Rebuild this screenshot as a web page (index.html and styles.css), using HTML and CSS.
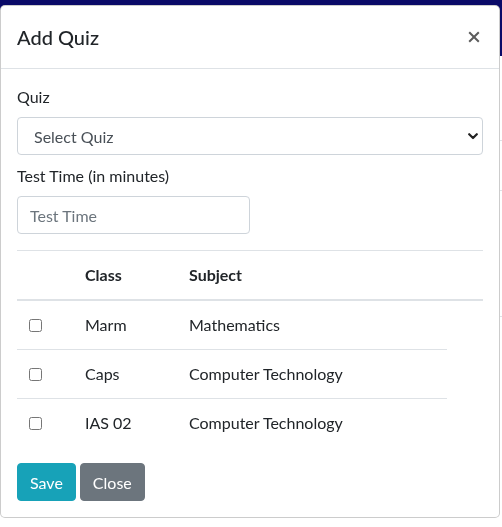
FILE: index.html
```html
<!DOCTYPE html>
<html lang="en">
<head>
<meta charset="utf-8">
<title>Add Quiz</title>
<link rel="stylesheet" href="styles.css">
</head>
<body>
<div class="page">
  <nav class="navbar"></nav>
  <div class="content">
    <div class="row row-a"></div>
    <div class="row row-b"></div>
    <div class="row row-c"></div>
  </div>
</div>

<div class="modal">
  <div class="modal-header">
    <h5 class="modal-title">Add Quiz</h5>
    <button class="close" type="button" aria-label="Close">
      <svg width="12" height="12" viewBox="0 0 12 12"><path d="M1.2 1.2 L10.8 10.8 M10.8 1.2 L1.2 10.8" stroke="#5c5c5c" stroke-width="2" fill="none"/></svg>
    </button>
  </div>
  <div class="modal-body">
    <label class="field-label">Quiz</label>
    <div class="select-wrap">
      <select class="form-select">
        <option>Select Quiz</option>
      </select>
      <svg class="chevron" width="10" height="7" viewBox="0 0 10 7"><path d="M1.2 1.2 L5 5 L8.8 1.2" stroke="#222" stroke-width="2.2" fill="none" stroke-linecap="round" stroke-linejoin="round"/></svg>
    </div>
    <label class="field-label">Test Time (in minutes)</label>
    <input class="form-input" type="text" placeholder="Test Time">

    <table class="table">
      <colgroup>
        <col class="c1"><col class="c2"><col class="c3"><col class="c4">
      </colgroup>
      <thead>
        <tr><th></th><th>Class</th><th>Subject</th><th></th></tr>
      </thead>
      <tbody>
        <tr><td><input type="checkbox" class="check"></td><td>Marm</td><td>Mathematics</td></tr>
        <tr><td><input type="checkbox" class="check"></td><td>Caps</td><td>Computer Technology</td></tr>
        <tr><td><input type="checkbox" class="check"></td><td>IAS 02</td><td>Computer Technology</td></tr>
      </tbody>
    </table>

    <div class="actions">
      <button class="btn btn-info" type="button">Save</button>
      <button class="btn btn-secondary" type="button">Close</button>
    </div>
  </div>
</div>
</body>
</html>
```

FILE: styles.css
```css
* { box-sizing: border-box; }

body {
  margin: 0;
  font-family: "Lato", "Open Sans", sans-serif;
  font-size: 16px;
  line-height: 24px;
  color: #212529;
  background: #fff;
}

.page { display: flex; flex-direction: column; }
.navbar { height: 56px; background: #0a0a68; }
.content { display: flex; flex-direction: column; padding-top: 84px; }
.row { border-top: 1px solid #dee2e6; }
.row-a { height: 50px; }
.row-b { height: 126px; }
.row-c { height: 60px; }

.modal {
  position: fixed;
  top: 5px;
  left: 0;
  width: 500px;
  background: #fff;
  border: 1px solid rgba(0, 0, 0, 0.2);
  border-radius: 5px;
}

.modal-header {
  display: flex;
  justify-content: space-between;
  align-items: flex-start;
  padding: 16px;
  border-bottom: 1px solid #dee2e6;
}

.modal-title {
  margin: 0;
  font-size: 20px;
  line-height: 30px;
  font-weight: 500;
  color: #212529;
}

.close {
  border: 0;
  background: transparent;
  padding: 0;
  margin: 9px 3px 0 0;
  width: 12px;
  height: 12px;
  display: flex;
}

.modal-body { padding: 16px; }

.field-label {
  display: block;
  margin-bottom: 8px;
}

.select-wrap {
  position: relative;
  margin-bottom: 9px;
}

.form-select {
  appearance: none;
  -webkit-appearance: none;
  width: 100%;
  height: 38px;
  padding: 0 30px 0 16px;
  font-family: inherit;
  font-size: 16px;
  color: #495057;
  background: #fff;
  border: 1px solid #ced4da;
  border-radius: 4px;
}

.chevron {
  position: absolute;
  right: 5px;
  top: 16px;
}

.form-input {
  display: block;
  width: 233px;
  height: 38px;
  padding: 0 12px;
  font-family: inherit;
  font-size: 16px;
  color: #495057;
  border: 1px solid #ced4da;
  border-radius: 4px;
}
.form-input::placeholder { color: #6c757d; }

.table {
  width: 466px;
  margin-top: 16px;
  border-collapse: collapse;
  table-layout: fixed;
}
.c1 { width: 56px; }
.c2 { width: 104px; }
.c3 { width: 270px; }
.c4 { width: 36px; }

.table th,
.table td {
  padding: 12px;
  text-align: left;
  vertical-align: top;
  border-top: 1px solid #dee2e6;
}
.table th {
  font-weight: 700;
  border-bottom: 2px solid #dee2e6;
}
.table tbody tr:first-child td { border-top: 0; }

.check {
  margin: 6px 0 0 0;
  width: 13px;
  height: 13px;
  display: block;
}

.actions {
  display: flex;
  gap: 4px;
  margin-top: 16px;
}

.btn {
  height: 38px;
  padding: 0 12px;
  font-family: inherit;
  font-size: 16px;
  color: #fff;
  border: 1px solid transparent;
  border-radius: 4px;
}
.btn-info { background: #17a2b8; border-color: #17a2b8; }
.btn-secondary { background: #6c757d; border-color: #6c757d; }
```
